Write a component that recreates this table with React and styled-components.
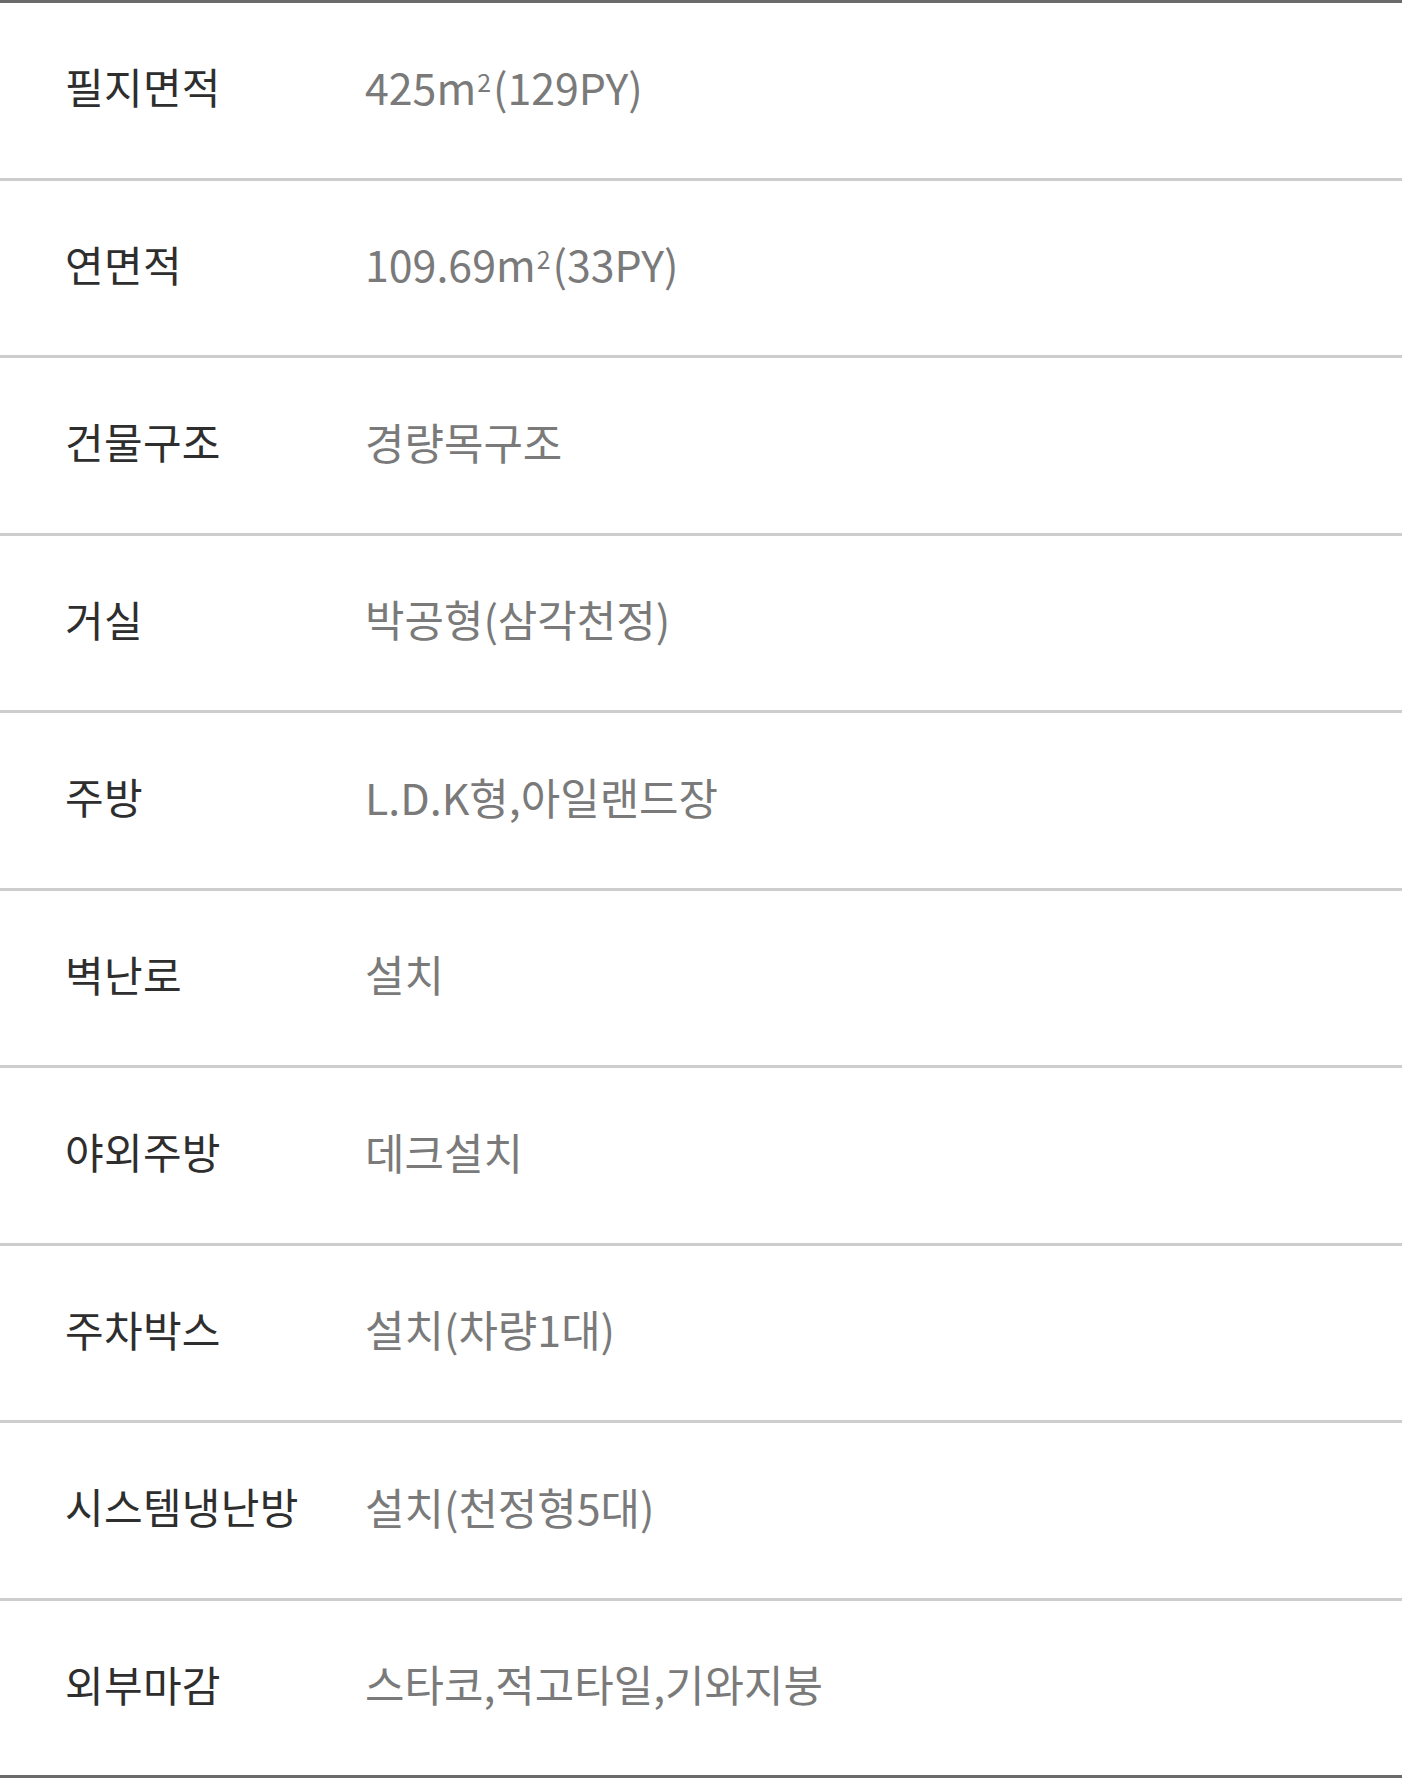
import React from "react";
import styled, { createGlobalStyle } from "styled-components";

const GlobalStyle = createGlobalStyle`
  html, body {
    margin: 0;
    padding: 0;
    background: #ffffff;
  }
  body {
    font-family: "Noto Sans CJK KR", "Noto Sans", sans-serif;
  }
`;

const Table = styled.div`
  width: 1402px;
  border-top: 3px solid #6b6b6b;
  border-bottom: 3px solid #6b6b6b;
  box-sizing: border-box;
`;

const Row = styled.div`
  display: grid;
  grid-template-columns: 365px 1fr;
  align-items: center;
  height: 166.5px;
  padding-bottom: 8px;
  & + & {
    border-top: 3px solid #cdcdcd;
  }
`;

const Label = styled.div`
  padding-left: 65px;
  font-size: 42px;
  font-weight: 400;
  color: #2e2e2e;
  line-height: 1;
  white-space: nowrap;
  letter-spacing: 0.3px;
`;

const Value = styled.div`
  font-size: 42.9px;
  font-weight: 400;
  color: #7a7a7a;
  line-height: 1;
  white-space: nowrap;
`;

const Sup = styled.span`
  font-size: 0.58em;
  line-height: 0;
  vertical-align: 13px;
  margin: 0 2px 0 1px;
`;

const rows = [
  ["필지면적", ["425m", "2", "(129PY)"]],
  ["연면적", ["109.69m", "2", "(33PY)"]],
  ["건물구조", ["경량목구조"]],
  ["거실", ["박공형(삼각천정)"]],
  ["주방", ["L.D.K형,아일랜드장"]],
  ["벽난로", ["설치"]],
  ["야외주방", ["데크설치"]],
  ["주차박스", ["설치(차량1대)"]],
  ["시스템냉난방", ["설치(천정형5대)"]],
  ["외부마감", ["스타코,적고타일,기와지붕"]],
];

export default function App() {
  return (
    <>
      <GlobalStyle />
      <Table>
        {rows.map(([label, value]) => (
          <Row key={label}>
            <Label>{label}</Label>
            <Value>
              {value[0]}
              {value.length > 1 && <Sup>{value[1]}</Sup>}
              {value.length > 2 && value[2]}
            </Value>
          </Row>
        ))}
      </Table>
    </>
  );
}
